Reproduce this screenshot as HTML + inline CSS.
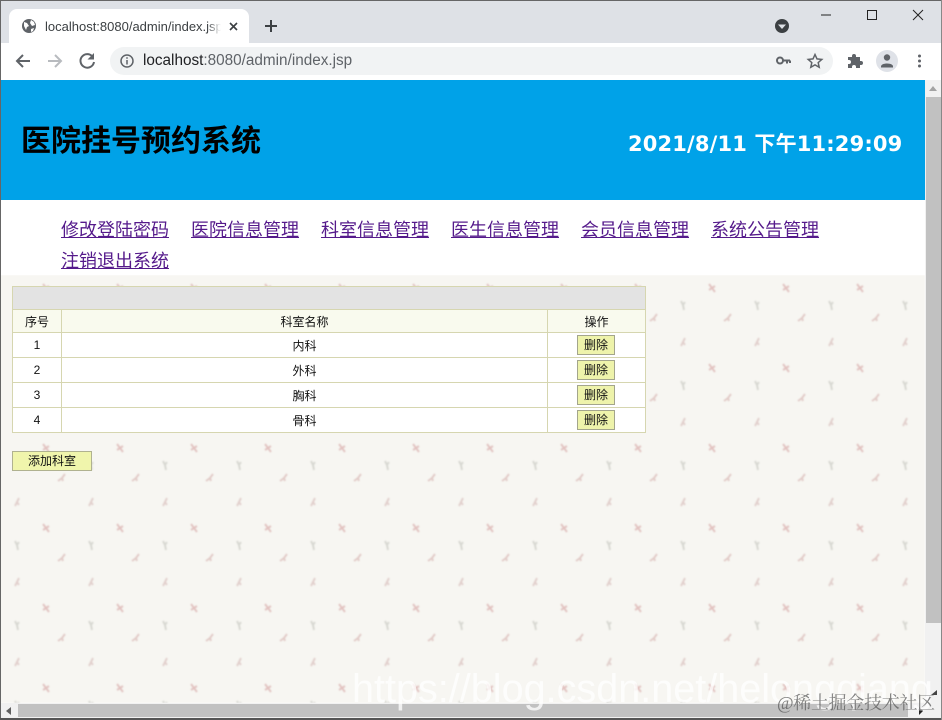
<!DOCTYPE html>
<html lang="zh">
<head>
<meta charset="utf-8">
<title>localhost:8080/admin/index.jsp</title>
<style>
html,body{margin:0;padding:0;width:942px;height:720px;overflow:hidden;background:#fff}
body{position:relative;font-family:"Liberation Sans","Noto Sans CJK SC",sans-serif}
.a{position:absolute}
.t{white-space:nowrap;line-height:1}
a{color:#551a8b;text-decoration:underline}
.nav a{position:absolute;font-size:18px;line-height:24px;white-space:nowrap}
table{position:absolute;left:12px;top:286px;width:633px;border-collapse:collapse;table-layout:fixed;font-size:12px;color:#111;background:#fff}
td{border:1px solid #d6d6b0;text-align:center;padding:0;position:relative}
.btn{position:absolute;box-sizing:border-box;background:#eef3ab;border:1px solid #a3a58c;font-size:12px;line-height:18px;text-align:center;color:#111}
</style>
</head>
<body>
<!-- Browser chrome -->
<div class="a" style="left:0;top:0;width:942px;height:43px;background:#dee1e6"></div>
<div class="a" style="left:0;top:0;width:942px;height:1px;background:#666"></div>
<div class="a" style="left:9px;top:9px;width:240px;height:34px;background:#fff;border-radius:8px 8px 0 0"></div>
<div class="a" style="left:0;top:43px;width:942px;height:37px;background:#fff"></div>
<div class="a" style="left:110px;top:47px;width:723px;height:28px;background:#f1f3f4;border-radius:14px"></div>

<svg class="a" style="left:0;top:0" width="942" height="80" fill="none">
  <!-- globe -->
  <circle cx="29" cy="26" r="7" fill="#5f6368"/>
  <path d="M24 22l3 1 2 3-2 1-1 3-2-4zM31 20l3 2 1 3-3 1-2-3zM31 29l3-1-1 3-2 1z" fill="#fff"/>
  <!-- tab close -->
  <path d="M230 23l7 7M237 23l-7 7" stroke="#3c4043" stroke-width="1.6"/>
  <!-- plus -->
  <path d="M271 20v12M265 26h12" stroke="#3c4043" stroke-width="2"/>
  <!-- back -->
  <path d="M30 61H17M23 55l-6 6 6 6" stroke="#5f6368" stroke-width="2"/>
  <!-- forward -->
  <path d="M48 61h13M55 55l6 6-6 6" stroke="#b8bbbf" stroke-width="2"/>
  <!-- reload -->
  <path d="M92.500 56.500A6.800 6.800 0 1 0 94 62" stroke="#5f6368" stroke-width="2"/>
  <path d="M94 53v6.500h-6.500z" fill="#5f6368"/>
  <!-- info -->
  <circle cx="127" cy="61" r="6" stroke="#5f6368" stroke-width="1.500"/>
  <path d="M127 60v4.500M127 57.300v1.500" stroke="#5f6368" stroke-width="1.500"/>
  <!-- key -->
  <circle cx="780" cy="60.500" r="3" stroke="#5f6368" stroke-width="2"/>
  <path d="M783 60.500h7M787 60.500v3M790 60.500v2.500" stroke="#5f6368" stroke-width="2"/>
  <!-- star -->
  <path d="M815 54.500l2 4.400 4.800.5-3.600 3.200 1 4.700-4.200-2.400-4.200 2.400 1-4.700-3.600-3.200 4.800-.5z" stroke="#5f6368" stroke-width="1.500"/>
  <!-- puzzle -->
  <path d="M848 57h4v-1a2 2 0 0 1 4 0v1h4v4h1a2 2 0 0 1 0 4h-1v3h-4v-1a2 2 0 0 0-4 0v1h-4v-4h1a2 2 0 0 0 0-4h-1z" fill="#5f6368"/>
  <!-- avatar -->
  <circle cx="887" cy="61" r="11" fill="#dfe2e8"/>
  <circle cx="887" cy="57.500" r="3.200" fill="#5f6368"/>
  <path d="M881 66.500c0-4 12-4 12 0v1h-12z" fill="#5f6368"/>
  <!-- menu dots -->
  <circle cx="919.500" cy="56" r="1.500" fill="#5f6368"/>
  <circle cx="919.500" cy="61" r="1.500" fill="#5f6368"/>
  <circle cx="919.500" cy="66" r="1.500" fill="#5f6368"/>
  <!-- tab search -->
  <circle cx="782" cy="26" r="7" fill="#3c4043"/>
  <path d="M778 24.500h8l-4 4.500z" fill="#dee1e6"/>
  <!-- window controls -->
  <path d="M821 15h10" stroke="#222" stroke-width="1"/>
  <rect x="867.500" y="10.500" width="9" height="9" stroke="#222" stroke-width="1"/>
  <path d="M913 10l10 10M923 10l-10 10" stroke="#222" stroke-width="1"/>
</svg>

<div class="a t" style="left:45px;top:19px;width:176px;overflow:hidden;font-size:13px;color:#3c4043;line-height:16px">localhost:8080/admin/index.jsp</div>
<div class="a" style="left:207px;top:17px;width:14px;height:20px;background:linear-gradient(to right,rgba(255,255,255,0),#fff)"></div>
<div class="a t" style="left:143px;top:52px;font-size:15.300px;line-height:18px;color:#5f6368"><span style="color:#202124">localhost</span>:8080/admin/index.jsp</div>

<!-- Page -->
<div class="a" style="left:0;top:80px;width:925px;height:120px;background:#00a2e8"></div>
<div class="a t" style="left:21px;top:124px;font-size:30px;line-height:36px;font-weight:bold;color:#000">医院挂号预约系统</div>
<div class="a t" style="left:628px;top:130px;font-size:21px;line-height:28px;font-weight:bold;color:#fff;font-family:'DejaVu Sans','Noto Sans CJK SC',sans-serif;letter-spacing:.15px">2021/8/11 下午11:29:09</div>

<div class="nav">
  <a style="left:61px;top:218px">修改登陆密码</a>
  <a style="left:191px;top:218px">医院信息管理</a>
  <a style="left:321px;top:218px">科室信息管理</a>
  <a style="left:451px;top:218px">医生信息管理</a>
  <a style="left:581px;top:218px">会员信息管理</a>
  <a style="left:711px;top:218px">系统公告管理</a>
  <a style="left:61px;top:249px">注销退出系统</a>
</div>

<!-- patterned background -->
<svg class="a" style="left:0;top:275px" width="925" height="428">
  <defs>
    <pattern id="p" width="74" height="80" patternUnits="userSpaceOnUse">
      <rect width="74" height="80" fill="#f7f6f2"/>
      <path d="M43 9l3 4 3 4M46 13l3-2M46 13l-3 2" stroke="#e2c3c1" stroke-width="2" fill="none"/>
      <path d="M15 26l2 4 1 5M17 30l2-3" stroke="#d8d8d2" stroke-width="2" fill="none"/>
      <path d="M65 39l-3 4-4 3M62 43l1 3" stroke="#e2cbc8" stroke-width="2" fill="none"/>
      <path d="M19 63l-2 4-2 4M17 67l2 3" stroke="#e2d0cd" stroke-width="2" fill="none"/>
    </pattern>
    <filter id="b" x="0" y="0" width="100%" height="100%"><feGaussianBlur stdDeviation="0.7"/></filter>
  </defs>
  <rect width="925" height="428" fill="url(#p)" filter="url(#b)"/>
</svg>

<table>
  <colgroup><col style="width:49px"><col style="width:486px"><col style="width:98px"></colgroup>
  <tr style="height:23px;background:#e3e3e3"><td colspan="3"></td></tr>
  <tr style="height:23px;background:#f9faee"><td>序号</td><td>科室名称</td><td>操作</td></tr>
  <tr style="height:25px"><td>1</td><td>内科</td><td></td></tr>
  <tr style="height:25px"><td>2</td><td>外科</td><td></td></tr>
  <tr style="height:25px"><td>3</td><td>胸科</td><td></td></tr>
  <tr style="height:25px"><td>4</td><td>骨科</td><td></td></tr>
</table>
<div class="a btn" style="left:577px;top:335px;width:38px;height:20px">删除</div>
<div class="a btn" style="left:577px;top:360px;width:38px;height:20px">删除</div>
<div class="a btn" style="left:577px;top:385px;width:38px;height:20px">删除</div>
<div class="a btn" style="left:577px;top:410px;width:38px;height:20px">删除</div>
<div class="a btn" style="left:12px;top:451px;width:80px;height:20px;background:#f0f5ac;border-color:#b0b290">添加科室</div>

<!-- Scrollbars -->
<div class="a" style="left:925px;top:80px;width:17px;height:640px;background:#f1f1f1"></div>
<div class="a" style="left:926px;top:97px;width:15px;height:526px;background:#c1c1c1"></div>
<div class="a" style="left:0;top:703px;width:925px;height:17px;background:#f1f1f1"></div>
<div class="a" style="left:18px;top:704px;width:890px;height:13px;background:#c1c1c1"></div>
<svg class="a" style="left:0;top:80px" width="942" height="640">
  <path d="M933 6l4 5h-8z" fill="#a3a3a3"/>
  <path d="M6 631l5-4v8z" fill="#606060"/>
  <path d="M919 627l4 4-4 4z" fill="#222"/>
  <path d="M931 615l6-5v5z" fill="#444"/>
</svg>

<!-- Window frame -->
<div class="a" style="left:0;top:0;width:1px;height:720px;background:#666"></div>
<div class="a" style="left:0;top:718px;width:942px;height:2px;background:#555"></div>
<div class="a" style="left:941px;top:0;width:1px;height:720px;background:#888"></div>

<!-- Watermarks -->
<div class="a t" style="left:352px;top:666px;font-size:39.600px;line-height:46px;color:rgba(255,255,255,.75)">https://blog.csdn.net/helongqiang</div>
<div class="a t" style="left:777px;top:692px;font-size:18px;line-height:22px;letter-spacing:-.3px;color:rgba(90,90,90,.75);font-family:'Liberation Serif','Noto Serif CJK SC',serif">@稀土掘金技术社区</div>
</body>
</html>
